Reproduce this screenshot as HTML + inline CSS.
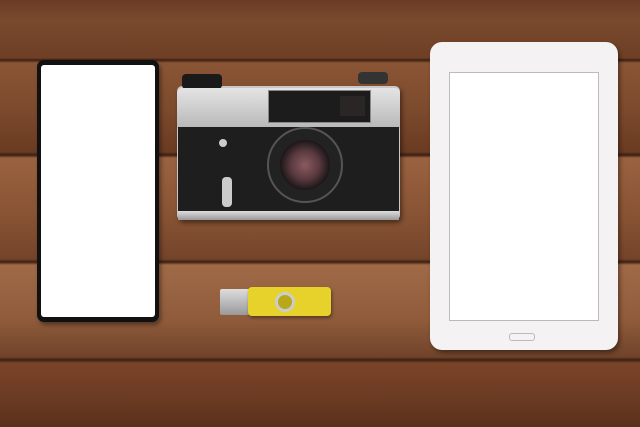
<!DOCTYPE html><html><head><style>
body{margin:0;width:640px;height:427px;overflow:hidden;position:relative;
background:linear-gradient(180deg,#6a3c24 0,#7a4a2e 20px,#6e3f25 58px,#3a2014 60px,#8a5535 63px,#7c4a2d 110px,#6a3b22 152px,#3a1f12 155px,#9a6240 158px,#8a5535 210px,#74442a 259px,#3b2012 262px,#a06a47 265px,#8f5b3b 320px,#70432a 357px,#3a1f12 360px,#7a4429 363px,#6a3a22 400px,#5a301c 427px);}
div{position:absolute;box-sizing:border-box}
</style></head><body>
<!-- phone -->
<div style="left:37px;top:60px;width:122px;height:262px;background:#111;border-radius:7px;box-shadow:2px 3px 4px rgba(0,0,0,.4)"></div>
<div style="left:41px;top:65px;width:114px;height:252px;background:#fff;border-radius:3px"></div>
<!-- camera -->
<div style="left:177px;top:86px;width:223px;height:134px;background:#c8c8c8;border-radius:5px;box-shadow:2px 3px 5px rgba(0,0,0,.45)"></div>
<div style="left:182px;top:74px;width:40px;height:15px;background:#1a1a1a;border-radius:4px"></div>
<div style="left:358px;top:72px;width:30px;height:12px;background:#333;border-radius:4px"></div>
<div style="left:177px;top:88px;width:223px;height:40px;background:linear-gradient(180deg,#e4e4e4,#b8b8b8);border-radius:5px 5px 0 0"></div>
<div style="left:268px;top:90px;width:103px;height:33px;background:#1c1c1c;border:1px solid #888"></div>
<div style="left:340px;top:96px;width:25px;height:20px;background:#2a2625"></div>
<div style="left:178px;top:127px;width:221px;height:86px;background:#1e1e1e"></div>
<div style="left:178px;top:211px;width:221px;height:9px;background:linear-gradient(180deg,#ddd,#999)"></div>
<div style="left:267px;top:127px;width:76px;height:76px;border-radius:50%;background:#222;border:2px solid #555"></div>
<div style="left:280px;top:140px;width:50px;height:50px;border-radius:50%;background:radial-gradient(circle,#8a5a60 0,#5a3a40 40%,#111 75%)"></div>
<div style="left:222px;top:177px;width:10px;height:30px;background:#ccc;border-radius:4px"></div>
<div style="left:219px;top:139px;width:8px;height:8px;background:#ccc;border-radius:50%"></div>
<!-- tablet -->
<div style="left:430px;top:42px;width:188px;height:308px;background:#f4f2f2;border-radius:12px;box-shadow:2px 3px 5px rgba(0,0,0,.4)"></div>
<div style="left:449px;top:72px;width:150px;height:249px;background:#fff;border:1px solid #bbb"></div>
<div style="left:509px;top:333px;width:26px;height:8px;border:1px solid #bbb;border-radius:3px"></div>
<!-- usb -->
<div style="left:220px;top:289px;width:32px;height:26px;background:linear-gradient(180deg,#ddd,#999);border-radius:2px"></div>
<div style="left:248px;top:287px;width:83px;height:29px;background:#e6d22a;border-radius:4px;box-shadow:1px 2px 3px rgba(0,0,0,.4)"></div>
<div style="left:275px;top:292px;width:20px;height:20px;border-radius:50%;background:#b8a81a;border:3px solid #ccc"></div>
</body></html>
